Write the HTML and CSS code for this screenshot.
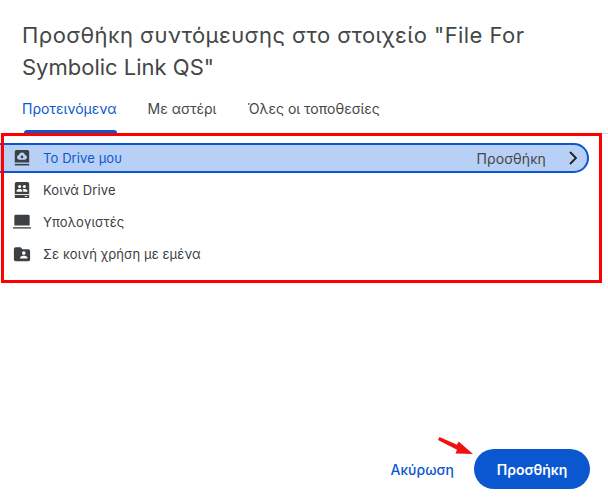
FILE: index.html
```html
<!DOCTYPE html>
<html lang="el">
<head>
  <meta charset="UTF-8" />
  <title>Προσθήκη συντόμευσης</title>
  <link rel="stylesheet" href="styles.css">
</head>
<body>
  <main class="dialog">
    <h1 class="dialog-title">Προσθήκη συντόμευσης στο στοιχείο "File For Symbolic Link QS"</h1>

    <nav class="tabs">
      <a class="tab tab-active">Προτεινόμενα</a>
      <a class="tab">Με αστέρι</a>
      <a class="tab">Όλες οι τοποθεσίες</a>
    </nav>

    <ul class="locations">
      <li class="location location-selected">
        <svg class="location-icon" viewBox="0 0 20 20">
          <path d="M4 1h12a2 2 0 0 1 2 2v12H2V3a2 2 0 0 1 2-2z"/>
          <rect x="2" y="16.5" width="16" height="1.8"/>
          <path class="icon-cut" d="M10 3.800c1.900 0 3.100 1.300 3.300 3 1.300.2 2.200 1.200 2.200 2.500 0 1.500-1.100 2.700-2.700 2.700H7.200c-1.600 0-2.700-1.200-2.700-2.700 0-1.300.9-2.300 2.200-2.500.2-1.700 1.400-3 3.300-3z"/>
          <circle cx="10" cy="8.800" r="1.500"/>
        </svg>
        <span class="location-name">Το Drive μου</span>
        <span class="location-add">Προσθήκη</span>
        <svg class="location-chevron" viewBox="0 0 16 16"><path d="M5 2l6 6-6 6"/></svg>
      </li>
      <li class="location">
        <svg class="location-icon" viewBox="0 0 20 20">
          <path d="M4 1h12a2 2 0 0 1 2 2v15a1 1 0 0 1-1 1H3a1 1 0 0 1-1-1V3a2 2 0 0 1 2-2z"/>
          <rect class="icon-cut" x="2" y="14.6" width="16" height="1"/>
          <rect class="icon-cut" x="13" y="16.6" width="3" height="1"/>
          <circle class="icon-cut" cx="7.4" cy="6.2" r="1.7"/>
          <circle class="icon-cut" cx="12.6" cy="6.2" r="1.7"/>
          <path class="icon-cut" d="M4 12v-1.200C4 9.600 6 9 7.400 9s3 .6 3 1.800V12zM11.400 12v-1.200c0-.7-.3-1.200-.7-1.600.7-.2 1.300-.2 1.900-.2 1.400 0 3.400.6 3.400 1.800V12z"/>
        </svg>
        <span class="location-name">Κοινά Drive</span>
      </li>
      <li class="location">
        <svg class="location-icon" viewBox="0 0 20 16">
          <path d="M3 0h14a1.500 1.500 0 0 1 1.500 1.500V12H1.500V1.500A1.500 1.500 0 0 1 3 0z"/>
          <rect y="13.800" width="20" height="1.500"/>
        </svg>
        <span class="location-name">Υπολογιστές</span>
      </li>
      <li class="location">
        <svg class="location-icon" viewBox="0 0 20 20">
          <path d="M3 2.500h5.500l2 2.200H17a2 2 0 0 1 2 2V16a2 2 0 0 1-2 2H3a2 2 0 0 1-2-2V4.500a2 2 0 0 1 2-2z"/>
          <circle class="icon-cut" cx="12" cy="9" r="2"/>
          <path class="icon-cut" d="M8 15v-1c0-1.400 2.600-2 4-2s4 .6 4 2v1z"/>
        </svg>
        <span class="location-name">Σε κοινή χρήση με εμένα</span>
      </li>
    </ul>

    <footer class="actions">
      <a class="btn-cancel">Ακύρωση</a>
      <button class="btn-add" type="button">Προσθήκη</button>
    </footer>
  </main>

  <!-- annotations drawn on top of the dialog -->
  <div class="mark-box"></div>
  <svg class="mark-arrow" viewBox="0 0 36 20">
    <path d="M1.500 0 19 7.800l1.600-3.300L35 17l-17.500-.6 1.500-3.600L0 3z"/>
  </svg>
</body>
</html>
```

FILE: styles.css
```css
:root {
  --color-text: #3c4043;
  --color-title: #444746;
  --color-accent: #0b57d0;
  --color-selected: #b9d0f6;
  --color-icon: #3c4043;
  --font-ui: Inter, Roboto, 'Noto Sans', sans-serif;
}

* {
  box-sizing: border-box;
}

html,
body {
  margin: 0;
  height: 500px;
  overflow: hidden;
  background: #ffffff;
}

body {
  position: relative;
  font-family: var(--font-ui);
  color: var(--color-text);
}

.dialog {
  height: 500px;
  display: flex;
  flex-direction: column;
  padding: 19px 0 11px;
}

.dialog-title {
  margin: 0 0 0 22px;
  width: 540px;
  font-size: 22px;
  font-weight: 400;
  line-height: 32px;
  color: var(--color-title);
}

.dialog-title::first-line {
  letter-spacing: 0.43px;
}

.tabs {
  display: flex;
  gap: 31px;
  margin-top: 13px;
  padding-left: 22px;
  height: 38px;
  border-bottom: 1px solid #dadce0;
}

.tab {
  position: relative;
  font-size: 14px;
  line-height: 20px;
  padding-top: 3px;
  color: var(--color-title);
}

.tab-active {
  color: var(--color-accent);
}

.tab-active::after {
  content: "";
  position: absolute;
  left: 2px;
  right: 0;
  top: 34px;
  height: 3px;
  border-radius: 3px 3px 0 0;
  background: var(--color-accent);
}

.locations {
  list-style: none;
  margin: 8px 19px 0 0;
  padding: 0;
  flex-grow: 1;
}

.location {
  display: flex;
  align-items: center;
  height: 32px;
  padding: 0 6px 0 13px;
  font-size: 13px;
  letter-spacing: 0.1px;
}

.location-selected {
  height: 30px;
  margin: 1px 0 1px -20px;
  padding-left: 31px;
  color: var(--color-accent);
  background: var(--color-selected);
  border: 2px solid var(--color-accent);
  border-radius: 15px;
}

.location-icon {
  width: 18px;
  height: 18px;
  margin-right: 12px;
  flex-shrink: 0;
  fill: var(--color-icon);
}

.icon-cut {
  fill: #ffffff;
}

.location-selected .icon-cut {
  fill: var(--color-selected);
}

.location-name {
  flex-grow: 1;
}

.location-add {
  font-size: 14px;
  color: var(--color-title);
  margin-right: 19px;
}

.location-chevron {
  width: 16px;
  height: 16px;
  fill: none;
  stroke: #202124;
  stroke-width: 1.800;
}

.actions {
  display: flex;
  align-items: center;
  justify-content: flex-end;
  gap: 20px;
  margin-right: 18px;
}

.btn-cancel {
  font-size: 14px;
  font-weight: 500;
  color: var(--color-accent);
}

.btn-add {
  width: 116px;
  height: 40px;
  border: none;
  border-radius: 20px;
  background: var(--color-accent);
  color: #ffffff;
  font-family: var(--font-ui);
  font-size: 14px;
  font-weight: 600;
}

.mark-box {
  position: absolute;
  left: 1px;
  top: 133px;
  width: 601px;
  height: 150px;
  border: 3px solid #ff0000;
}

.mark-arrow {
  position: absolute;
  left: 438px;
  top: 437px;
  width: 36px;
  height: 20px;
  fill: #ee1111;
}
```
